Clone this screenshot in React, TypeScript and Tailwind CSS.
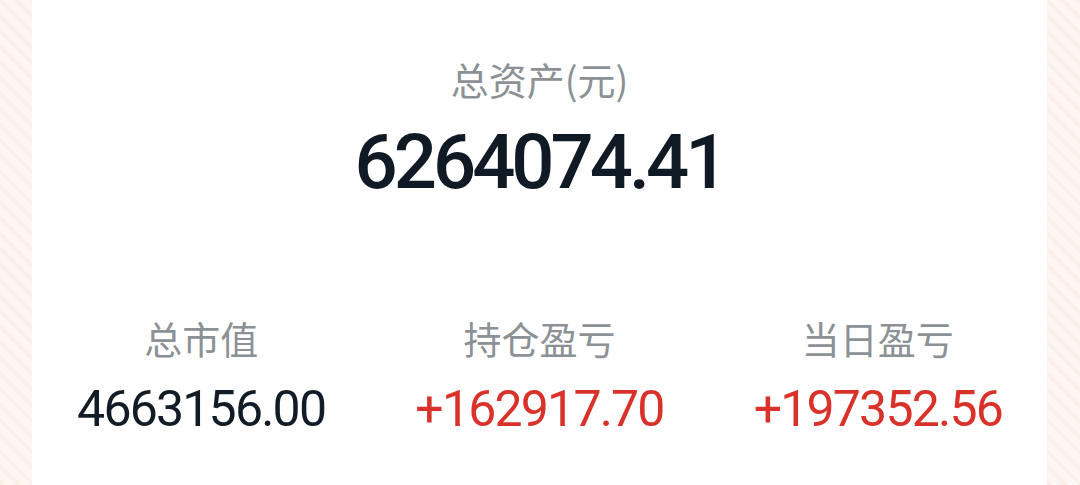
export default function App() {
  const stripe =
    "bg-[repeating-linear-gradient(45deg,#fbefe9_0px,#fbefe9_4px,#fdf6f3_4px,#fdf6f3_11px)]";
  const cols = [
    { label: "总市值", value: "4663156.00", color: "text-[#121c26]" },
    { label: "持仓盈亏", value: "+162917.70", color: "text-[#d9322b]" },
    { label: "当日盈亏", value: "+197352.56", color: "text-[#d9322b]" },
  ];
  return (
    <div className="w-[1080px] h-[485px] flex overflow-hidden bg-white">
      <div className={`w-[32px] h-full ${stripe}`} />
      <div className="flex-1 h-full bg-white flex flex-col items-center font-['Noto_Sans_CJK_SC',sans-serif]">
        {/* 总资产 */}
        <div className="pt-[54px] text-[38px] leading-[50px] text-[#8c9196]">总资产(元)</div>
        <div className="mt-[18px] h-[80px] text-[76px] leading-[80px] font-medium tracking-[-4px] text-[#0f1a24] font-['Roboto',sans-serif]">
          6264074.41
        </div>

        {/* 三栏 */}
        <div className="mt-[111px] w-full grid grid-cols-3">
          {cols.map((c) => (
            <div key={c.label} className="flex flex-col items-center">
              <div className="text-[38px] leading-[50px] text-[#8c9196]">{c.label}</div>
              <div
                className={`mt-[18px] text-[50px] leading-[56px] tracking-[-1.8px] font-['Roboto',sans-serif] ${c.color}`}
              >
                {c.value}
              </div>
            </div>
          ))}
        </div>
      </div>
      <div className={`w-[33px] h-full ${stripe}`} />
    </div>
  );
}
